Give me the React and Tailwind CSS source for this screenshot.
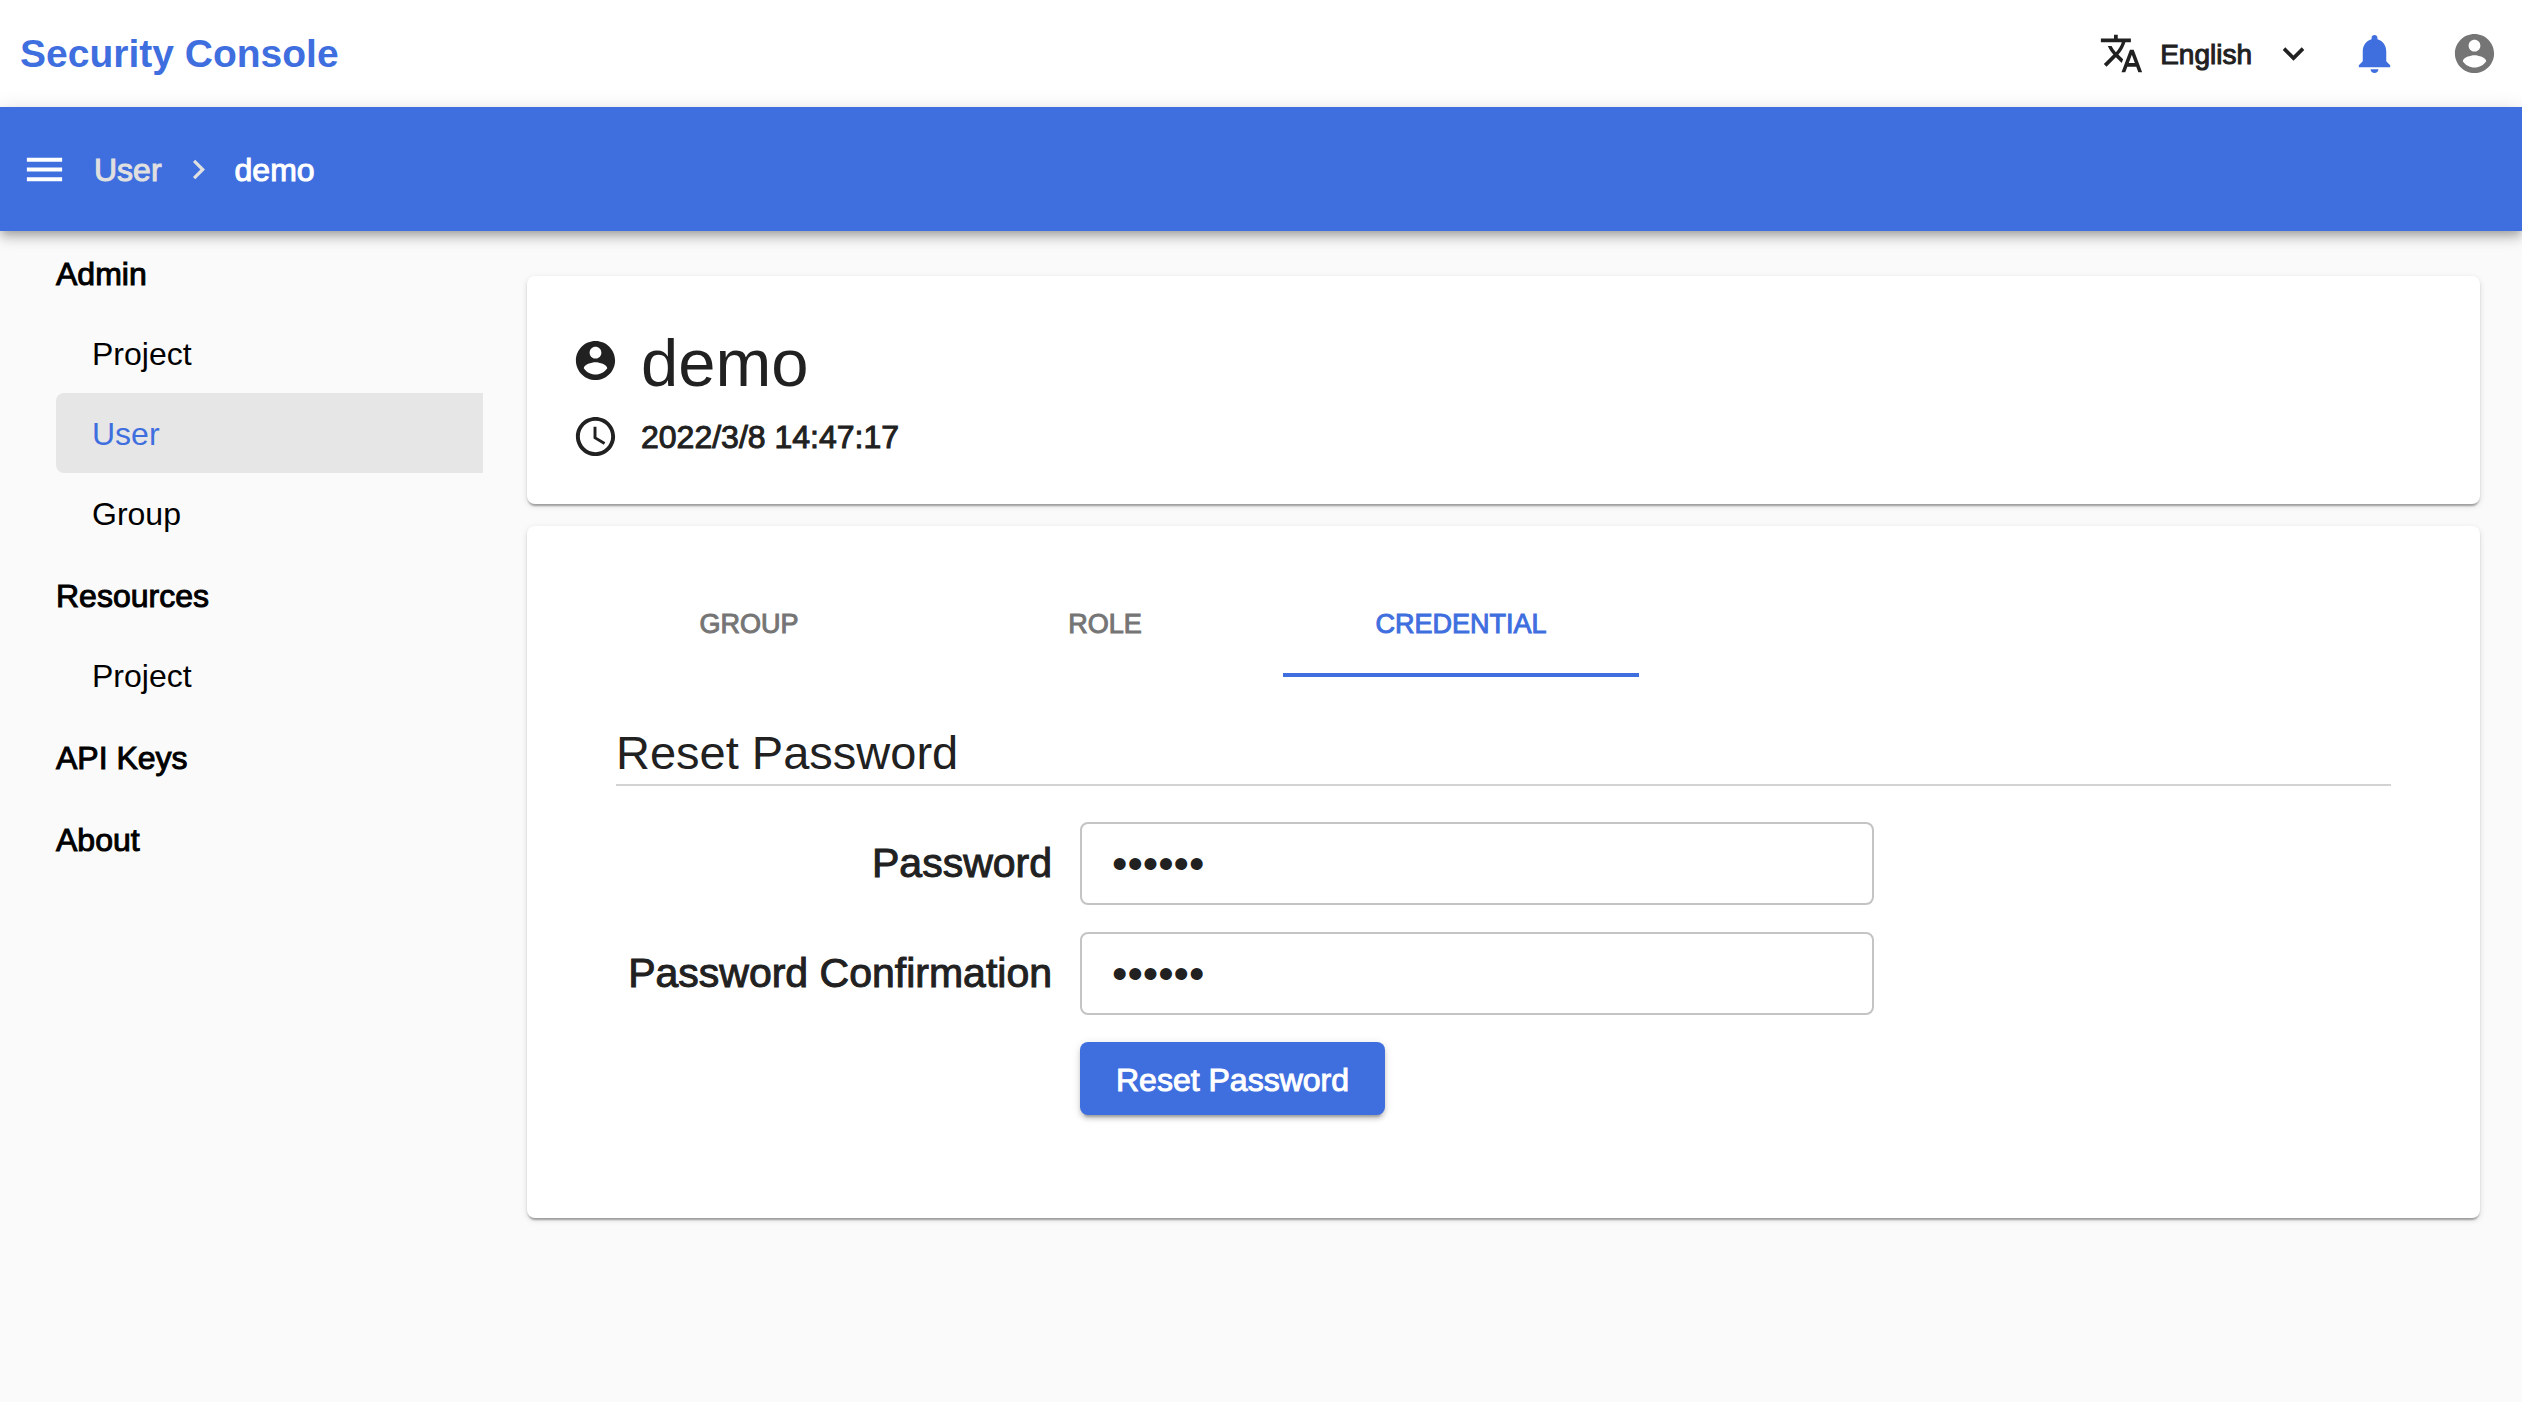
import React from "react";

function Icon({ d, className }) {
  return (
    <svg viewBox="0 0 24 24" fill="currentColor" aria-hidden="true" className={`shrink-0 ${className}`}>
      <path d={d} />
    </svg>
  );
}

const ICONS = {
  translate:
    "M12.87 15.07l-2.54-2.51.03-.03c1.74-1.94 2.98-4.17 3.71-6.53H17V4h-7V2H8v2H1v1.99h11.17C11.5 7.92 10.44 9.75 9 11.35 8.07 10.32 7.3 9.19 6.69 8h-2c.73 1.63 1.73 3.17 2.98 4.56l-5.09 5.02L4 19l5-5 3.11 3.11.76-2.04zM18.5 10h-2L12 22h2l1.12-3h4.75L21 22h2l-4.5-12zm-2.62 7l1.62-4.33L19.12 17h-3.24z",
  chevronDown: "M7.41 8.58L12 13.17l4.59-4.59L18 10l-6 6-6-6 1.41-1.42z",
  chevronRight: "M8.59 16.58L13.17 12 8.59 7.41 10 6l6 6-6 6-1.41-1.42z",
  bell: "M12 22c1.1 0 2-.9 2-2h-4c0 1.1.89 2 2 2zm6-6v-5c0-3.07-1.64-5.64-4.5-6.32V4c0-.83-.67-1.5-1.5-1.5s-1.5.67-1.5 1.5v.68C7.63 5.36 6 7.92 6 11v5l-2 2v1h16v-1l-2-2z",
  account:
    "M12 2C6.48 2 2 6.48 2 12s4.48 10 10 10 10-4.48 10-10S17.52 2 12 2zm0 3c1.66 0 3 1.34 3 3s-1.34 3-3 3-3-1.34-3-3 1.34-3 3-3zm0 14.2c-2.5 0-4.71-1.28-6-3.22.03-1.99 4-3.08 6-3.08 1.99 0 5.97 1.09 6 3.08-1.29 1.94-3.5 3.22-6 3.22z",
  clock:
    "M11.99 2C6.47 2 2 6.48 2 12s4.47 10 9.99 10C17.52 22 22 17.52 22 12S17.52 2 11.99 2zM12 20c-4.42 0-8-3.58-8-8s3.58-8 8-8 8 3.58 8 8-3.58 8-8 8zm.5-13H11v6l5.25 3.15.75-1.23-4.5-2.67z",
  menu: "M3 18h18v-2H3v2zm0-5h18v-2H3v2zm0-7v2h18V6H3z",
};

const NAV = [
  { title: "Admin", items: ["Project", "User", "Group"] },
  { title: "Resources", items: ["Project"] },
  { title: "API Keys", items: [] },
  { title: "About", items: [] },
];

const TABS = ["GROUP", "ROLE", "CREDENTIAL"];

function TopBar() {
  return (
    <header className="flex h-[107px] items-center justify-between bg-white pl-5 pr-6">
      <a href="#home" className="pt-[2px] text-[39px] font-bold text-[#3f6fdf]">
        Security Console
      </a>
      <div className="flex items-center">
        <button type="button" className="flex items-center text-[28px]">
          <Icon d={ICONS.translate} className="mr-4 size-[45px]" />
          <span className="pt-[2px] [-webkit-text-stroke:1px]">English</span>
          <Icon d={ICONS.chevronDown} className="ml-5 size-[43px]" />
        </button>
        <button type="button" aria-label="Notifications" className="ml-9 text-[#3f6fdf]">
          <Icon d={ICONS.bell} className="size-[47px]" />
        </button>
        <button type="button" aria-label="Account" className="ml-[53px] text-[#757575]">
          <Icon d={ICONS.account} className="size-[47px]" />
        </button>
      </div>
    </header>
  );
}

function BreadcrumbBar() {
  return (
    <div className="relative flex h-[124px] items-center bg-[#3f6fdf] pl-[21px] text-[32px] text-white shadow-[0_4px_8px_-2px_rgba(0,0,0,0.2),0_8px_10px_rgba(0,0,0,0.14),0_2px_20px_rgba(0,0,0,0.12)]">
      <button type="button" aria-label="Menu">
        <Icon d={ICONS.menu} className="size-[47px]" />
      </button>
      <nav aria-label="Breadcrumb" className="ml-[26px] flex items-center">
        <a href="#user" className="pt-[2px] text-[#e0e0e0] [-webkit-text-stroke:1px]">
          User
        </a>
        <Icon d={ICONS.chevronRight} className="mx-[17px] size-[39px] text-[#e0e0e0]" />
        <span className="pt-[2px] [-webkit-text-stroke:1px]">demo</span>
      </nav>
    </div>
  );
}

function SideNav() {
  return (
    <nav aria-label="Sections" className="w-[483px] shrink-0 pl-14 text-[32px] text-black">
      {NAV.map((group) => (
        <div key={group.title}>
          <a href="#section" className="flex h-[82px] items-center pt-1 [-webkit-text-stroke:1px]">
            {group.title}
          </a>
          {group.items.map((item) => (
            <a
              key={item}
              href="#item"
              className={`flex h-20 items-center rounded-l-lg pl-9 pt-[2px] ${
                item === "User" ? "bg-[#e6e6e6] text-[#3f6fdf]" : ""
              }`}
            >
              {item}
            </a>
          ))}
        </div>
      ))}
    </nav>
  );
}

function Card({ children, className }) {
  return (
    <section
      className={`rounded-lg bg-white shadow-[0_4px_2px_-2px_rgba(0,0,0,0.2),0_2px_2px_rgba(0,0,0,0.14),0_2px_6px_rgba(0,0,0,0.12)] ${className}`}
    >
      {children}
    </section>
  );
}

function PasswordRow({ id, label }) {
  return (
    <>
      <label htmlFor={id} className="col-start-1 whitespace-nowrap text-right text-[41px] [-webkit-text-stroke:1px]">
        {label}
      </label>
      <input
        id={id}
        type="password"
        defaultValue="secret"
        className="h-[83px] w-full min-w-0 rounded-lg border-2 border-[#c4c4c4] bg-white px-[30px] text-[44px] outline-none"
      />
    </>
  );
}

export default function App() {
  return (
    <div className="min-h-screen bg-[#fafafa] font-['Liberation_Sans',Arial,sans-serif] text-[#212121]">
      <TopBar />
      <BreadcrumbBar />
      <div className="flex">
        <SideNav />
        <main className="flex min-w-0 grow flex-col gap-[22px] pl-11 pr-[42px] pt-[45px]">
          <Card className="px-[45px] pb-[42px] pt-[46px]">
            <div className="flex h-[76px] items-center">
              <Icon d={ICONS.account} className="mr-[22px] size-[47px]" />
              <h1 className="pt-1.5 text-[67px] leading-[76px]">demo</h1>
            </div>
            <div className="flex h-16 items-center pt-[12px]">
              <Icon d={ICONS.clock} className="mr-[22px] size-[47px]" />
              <time className="pt-[2px] text-[32px] leading-10 [-webkit-text-stroke:1px]">2022/3/8 14:47:17</time>
            </div>
          </Card>
          <Card className="px-11 pb-[103px] pt-11">
            <div role="tablist" className="flex">
              {TABS.map((tab) => (
                <button
                  key={tab}
                  type="button"
                  role="tab"
                  aria-selected={tab === "CREDENTIAL"}
                  className={`h-[107px] w-[356px] border-b-4 pt-1.5 text-[27px] [-webkit-text-stroke:1px] ${
                    tab === "CREDENTIAL"
                      ? "border-b-[#3f6fdf] text-[#3f6fdf]"
                      : "border-b-transparent text-[#757575]"
                  }`}
                >
                  {tab}
                </button>
              ))}
            </div>
            <form className="px-[45px] pt-11">
              <h2 className="border-b-2 border-[#d3d3d3] py-[2px] text-[47px] leading-[59px]">Reset Password</h2>
              <div className="mt-9 grid grid-cols-[436fr_794fr_489fr] items-center gap-x-7 gap-y-[27px]">
                <PasswordRow id="password" label="Password" />
                <PasswordRow id="password-confirmation" label="Password Confirmation" />
                <button
                  type="button"
                  className="col-start-2 h-[73px] justify-self-start rounded-lg bg-[#3f6fdf] px-[36px] pt-[2px] text-[32px] text-white shadow-[0_6px_2px_-4px_rgba(0,0,0,0.2),0_4px_4px_rgba(0,0,0,0.14),0_2px_10px_rgba(0,0,0,0.12)] [-webkit-text-stroke:1px]"
                >
                  Reset Password
                </button>
              </div>
            </form>
          </Card>
        </main>
      </div>
    </div>
  );
}
